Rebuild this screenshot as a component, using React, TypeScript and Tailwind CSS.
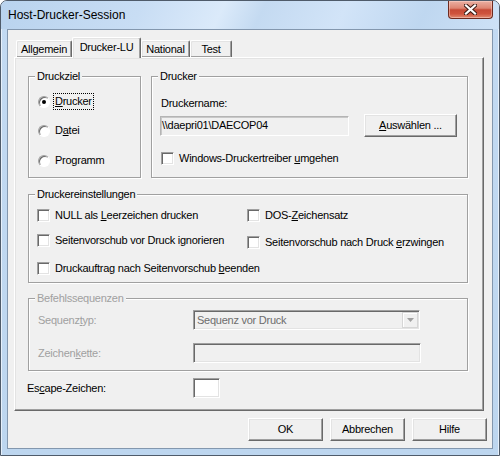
import React from "react";

// Win classic 3D edges used by tabs, buttons and edits
const raised =
  "border border-t-white border-l-white border-r-[#696969] border-b-[#696969] shadow-[inset_-1px_-1px_0_#a0a0a0,inset_1px_1px_0_#e3e3e3]";
const sunken =
  "border border-t-[#a0a0a0] border-l-[#a0a0a0] border-r-white border-b-white shadow-[inset_1px_1px_0_#696969,inset_-1px_-1px_0_#e3e3e3]";
const etched = "border border-[#a0a0a0] shadow-[inset_1px_1px_0_#fff,1px_1px_0_#fff]";

function U({ children }: { children: React.ReactNode }) {
  return <span className="underline decoration-1 underline-offset-[1px]">{children}</span>;
}

function Group({
  title,
  disabled,
  className,
  children,
}: {
  title: string;
  disabled?: boolean;
  className?: string;
  children?: React.ReactNode;
}) {
  return (
    <div className={`relative ${etched} ${className ?? ""}`}>
      <span
        className={`absolute left-[6px] top-[-7px] bg-[#f0f0f0] px-[2px] ${
          disabled ? "text-[#a0a0a0]" : ""
        }`}
      >
        {title}
      </span>
      {children}
    </div>
  );
}

function Checkbox({ children, className }: { children: React.ReactNode; className?: string }) {
  return (
    <div className={`flex h-[13px] items-center ${className ?? ""}`}>
      <span className={`h-[13px] w-[13px] shrink-0 bg-white ${sunken}`} />
      <span className="ml-[5px] whitespace-nowrap">{children}</span>
    </div>
  );
}

function Radio({
  checked,
  focused,
  children,
  className,
}: {
  checked?: boolean;
  focused?: boolean;
  children: React.ReactNode;
  className?: string;
}) {
  return (
    <div className={`flex h-[13px] items-center ${className ?? ""}`}>
      <span className="flex h-[12px] w-[12px] shrink-0 items-center justify-center rounded-full border border-t-[#a0a0a0] border-l-[#a0a0a0] border-r-white border-b-white bg-white shadow-[inset_1px_1px_0_#696969]">
        {checked && <span className="h-[4px] w-[4px] rounded-full bg-black" />}
      </span>
      <span
        className={`ml-[3px] border px-[1px] py-[1px] ${
          focused ? "border-dotted border-black" : "border-transparent"
        }`}
      >
        {children}
      </span>
    </div>
  );
}

function TitleBar() {
  return (
    <div className="flex h-[28px] items-start justify-between rounded-t-[6px] bg-[linear-gradient(115deg,#b9d3ee_0%,#c8ddf4_28%,#dbeafa_44%,#c4daf1_52%,#d2e4f8_68%,#bfd7f0_84%,#cde1f6_100%)]">
      <span className="pl-[7px] pt-[7px] text-[12px] leading-[15px] tracking-normal">
        Host-Drucker-Session
      </span>
      <div className="mr-[6px] flex h-[18px] w-[45px] items-center justify-center rounded-b-[4px] border border-t-0 border-[#6e2a1f] bg-[linear-gradient(180deg,#eab0a3_0%,#dd8572_42%,#c64a36_52%,#cf533c_75%,#e08a70_100%)] shadow-[inset_0_0_0_1px_rgba(255,220,210,0.45)]">
        <svg width="13" height="11" viewBox="0 0 13 11">
          <path d="M2 1.5 L11 9.5 M11 1.5 L2 9.5" stroke="#3d1b14" strokeWidth="4.2" strokeLinecap="square" />
          <path d="M2 1.5 L11 9.5 M11 1.5 L2 9.5" stroke="#ffffff" strokeWidth="2.2" strokeLinecap="square" />
        </svg>
      </div>
    </div>
  );
}

function Tabs() {
  const tab = `mt-[3px] h-[17px] rounded-t-[2px] pt-[2px] text-center bg-[#f0f0f0] border-b-0 ${raised}`;
  return (
    <div className="flex h-[20px] items-start pl-[8px]">
      <div className={`w-[56px] ${tab}`}>Allgemein</div>
      <div
        className={`relative z-10 h-[21px] w-[69px] rounded-t-[2px] border-b-0 bg-[#f0f0f0] pt-[3px] text-center ${raised} shadow-[inset_-1px_0_0_#a0a0a0,inset_1px_1px_0_#e3e3e3]`}
      >
        Drucker-LU
      </div>
      <div className={`w-[49px] ${tab}`}>National</div>
      <div className={`w-[42px] ${tab}`}>Test</div>
    </div>
  );
}

function Panel() {
  return (
    <div className={`ml-[6px] h-[354px] w-[470px] bg-[#f0f0f0] pl-[13px] pt-[18px] ${raised}`}>
      <div className="flex">
        <Group title="Druckziel" className="h-[102px] w-[113px] pl-[9px]">
          <Radio checked focused className="mt-[18px]">
            <U>D</U>rucker
          </Radio>
          <Radio className="mt-[16px]">
            D<U>a</U>tei
          </Radio>
          <Radio className="mt-[17px]">Programm</Radio>
        </Group>

        <Group title="Drucker" className="ml-[10px] h-[102px] w-[317px] pl-[8px]">
          <div className="ml-[1px] mt-[20px]">Druckername:</div>
          <div className="mt-[4px] flex items-center">
            <div className="flex h-[20px] w-[189px] items-center border border-t-[#b4b4b4] border-l-[#b4b4b4] border-r-white border-b-white bg-[#f0f0f0] pl-[1px] shadow-[inset_1px_1px_0_#c8c8c8]">
              \\daepri01\DAECOP04
            </div>
            <div className={`ml-[15px] flex h-[23px] w-[93px] items-center justify-center bg-[#f0f0f0] ${raised}`}>
              <span>
                <U>A</U>uswählen ...
              </span>
            </div>
          </div>
          <Checkbox className="ml-[1px] mt-[15px]">
            Windows-Druckertreiber <U>u</U>mgehen
          </Checkbox>
        </Group>
      </div>

      <Group title="Druckereinstellungen" className="mt-[16px] h-[89px] w-[440px] pl-[8px]">
        <div className="grid grid-cols-[210px_1fr] gap-y-[12px] pt-[14px]">
          <Checkbox>
            NULL als <U>L</U>eerzeichen drucken
          </Checkbox>
          <Checkbox>
            DOS-<U>Z</U>eichensatz
          </Checkbox>
          <Checkbox>
            Seitenvorschub vor Druck i<U>g</U>norieren
          </Checkbox>
          <Checkbox className="mt-[2px]">
            Seitenvorschub nach Druck <U>e</U>rzwingen
          </Checkbox>
          <Checkbox className="col-span-2 mt-[1px]">
            Druckauftrag nach Seitenvorschub <U>b</U>eenden
          </Checkbox>
        </div>
      </Group>

      <Group title="Befehlssequenzen" disabled className="mt-[15px] h-[73px] w-[440px] pl-[9px]">
        <div className="mt-[11px] flex h-[20px] items-center text-[#a0a0a0]">
          <span className="w-[155px]">
            Sequenz<U>t</U>yp:
          </span>
          <div className={`relative flex h-[20px] w-[227px] items-center bg-[#f0f0f0] pl-[3px] text-[#6d6d6d] ${sunken}`}>
            Sequenz vor Druck
            <span className="absolute right-[1px] top-[1px] flex h-[16px] w-[16px] items-center justify-center border border-[#d6d6d6] bg-[#f0f0f0] shadow-[inset_1px_1px_0_#fff]">
              <svg width="7" height="4" viewBox="0 0 7 4">
                <path d="M0 0 H7 L3.5 4 Z" fill="#a0a0a0" />
              </svg>
            </span>
          </div>
        </div>
        <div className="mt-[13px] flex h-[20px] items-center text-[#a0a0a0]">
          <span className="w-[155px]">
            Zeichen<U>k</U>ette:
          </span>
          <div className={`h-[20px] w-[228px] bg-[#f0f0f0] ${sunken}`} />
        </div>
      </Group>

      <div className="ml-[-1px] mt-[7px] flex h-[20px] items-center">
        <span className="w-[166px]">
          Es<U>c</U>ape-Zeichen:
        </span>
        <div className={`h-[20px] w-[27px] bg-white ${sunken}`} />
      </div>
    </div>
  );
}

function Buttons() {
  const btn = `flex h-[23px] w-[75px] items-center justify-center bg-[#f0f0f0] ${raised}`;
  return (
    <div className="mt-[7px] flex justify-end gap-[7px] pr-[5px]">
      <div className={btn}>OK</div>
      <div className={btn}>Abbrechen</div>
      <div className={btn}>Hilfe</div>
    </div>
  );
}

export default function App() {
  return (
    <div className="h-[456px] w-[500px] bg-white font-['Liberation_Sans',Arial,sans-serif] text-[11px] leading-[13px] tracking-[-0.25px] text-black">
      <div className="flex h-full w-full flex-col rounded-t-[7px] border border-[#4f5b6a] bg-[linear-gradient(180deg,#c3daf2,#bdd6ef)] shadow-[inset_1px_0_0_#e6f0fb,inset_-1px_0_0_#e6f0fb]">
        <TitleBar />
        <div className="mx-[6px] flex h-[420px] flex-col border border-[#8397ae] bg-[#f0f0f0] pt-[7px]">
          <Tabs />
          <Panel />
          <Buttons />
        </div>
      </div>
    </div>
  );
}
